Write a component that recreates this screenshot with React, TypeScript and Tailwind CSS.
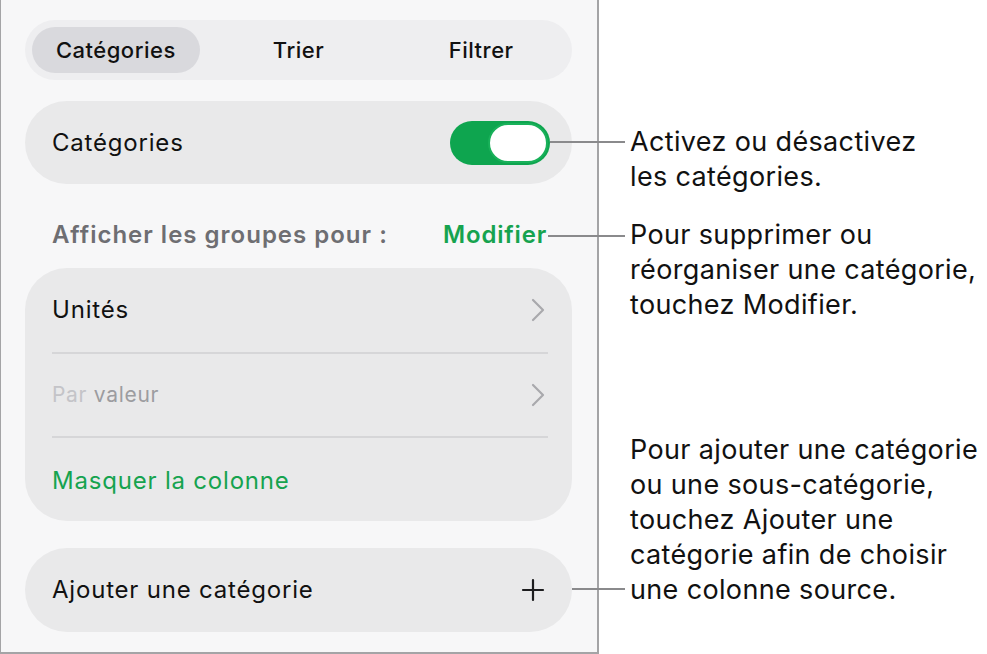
import React from "react";

const font = { fontFamily: "Inter, 'Noto Sans', sans-serif" };

function Chevron() {
  return (
    <svg width="14" height="24" viewBox="0 0 14 24" fill="none">
      <path d="M2 2 L12 12 L2 22" stroke="#a9a9ad" strokeWidth="2.2" strokeLinecap="round" strokeLinejoin="round" />
    </svg>
  );
}

function Plus() {
  return (
    <svg width="24" height="24" viewBox="0 0 24 24" fill="none">
      <path d="M12 2 V22 M2 12 H22" stroke="#1c1c1e" strokeWidth="2.2" strokeLinecap="round" />
    </svg>
  );
}

export default function App() {
  return (
    <div className="relative flex w-[987px] h-[654px] bg-white text-[#111]" style={font}>
      {/* Panel */}
      <div className="w-[599px] h-[654px] shrink-0 bg-[#f7f7f8] border-l border-r-2 border-b-2 border-[#a4a4a6] pl-[24px] pr-[25px] pt-[20px] flex flex-col">
        {/* Segmented control */}
        <div className="h-[60px] rounded-full bg-[#eeeef0] p-[7px] grid grid-cols-3 text-[22px] font-medium tracking-[0.5px]">
          <div className="rounded-full bg-[#d9d9dd] flex items-center justify-center mr-[10px]">Catégories</div>
          <div className="flex items-center justify-center">Trier</div>
          <div className="flex items-center justify-center pl-[10px]">Filtrer</div>
        </div>

        {/* Toggle card */}
        <div className="mt-[21px] h-[83px] rounded-full bg-[#e9e9ea] flex items-center justify-between pl-[27px] pr-[22px]">
          <span className="text-[24px] tracking-[0.8px]">Catégories</span>
          <div className="w-[100px] h-[44px] rounded-full bg-[#0ea54f] flex items-center justify-end p-[2px]">
            <div className="w-[60px] h-[40px] rounded-full bg-white border-2 border-[#19b15a]" />
          </div>
        </div>

        {/* Header */}
        <div className="h-[84px] pt-[18px] flex items-center justify-between pl-[27px] pr-[25px]">
          <span className="text-[24px] font-semibold text-[#6e6e72] tracking-[1px]">Afficher les groupes pour :</span>
          <span className="text-[24px] font-semibold text-[#16a34f] tracking-[0.8px]">Modifier</span>
        </div>

        {/* Group card */}
        <div className="h-[253px] rounded-[42px] bg-[#e9e9ea] flex flex-col">
          <div className="h-[84px] flex items-center justify-between pl-[27px] pr-[27px]">
            <span className="text-[24px] tracking-[0.8px]">Unités</span>
            <Chevron />
          </div>
          <div className="h-[2px] bg-[#d6d6d8] ml-[27px] mr-[24px]" />
          <div className="h-[82px] flex items-center justify-between pl-[27px] pr-[27px]">
            <span className="text-[21px] tracking-[0.7px]">
              <span className="text-[#c4c4c8]">Par </span>
              <span className="text-[#9c9ca0]">valeur</span>
            </span>
            <Chevron />
          </div>
          <div className="h-[2px] bg-[#d6d6d8] ml-[27px] mr-[24px]" />
          <div className="flex-1 flex items-center pl-[27px] pt-[2px]">
            <span className="text-[24px] text-[#16a34f] tracking-[0.8px]">Masquer la colonne</span>
          </div>
        </div>

        {/* Add card */}
        <div className="mt-[27px] h-[84px] rounded-full bg-[#e9e9ea] flex items-center justify-between pl-[27px] pr-[27px]">
          <span className="text-[24px] tracking-[0.8px]">Ajouter une catégorie</span>
          <Plus />
        </div>
      </div>

      {/* Callouts */}
      <div className="flex flex-col pl-[31px] pt-[124px] text-[27px] leading-[35px] text-[#111] tracking-[0.35px] whitespace-nowrap">
        <div>
          <div>Activez ou désactivez</div>
          <div>les catégories.</div>
        </div>
        <div className="mt-[23px]">
          <div>Pour supprimer ou</div>
          <div>réorganiser une catégorie,</div>
          <div>touchez Modifier.</div>
        </div>
        <div className="mt-[110px]">
          <div>Pour ajouter une catégorie</div>
          <div>ou une sous-catégorie,</div>
          <div>touchez Ajouter une</div>
          <div>catégorie afin de choisir</div>
          <div>une colonne source.</div>
        </div>
      </div>

      {/* Callout lines */}
      <div className="absolute left-[550px] top-[141px] w-[75px] h-[2px] bg-[#8a8a8c]" />
      <div className="absolute left-[548px] top-[235px] w-[77px] h-[2px] bg-[#8a8a8c]" />
      <div className="absolute left-[572px] top-[588px] w-[53px] h-[2px] bg-[#8a8a8c]" />
    </div>
  );
}
